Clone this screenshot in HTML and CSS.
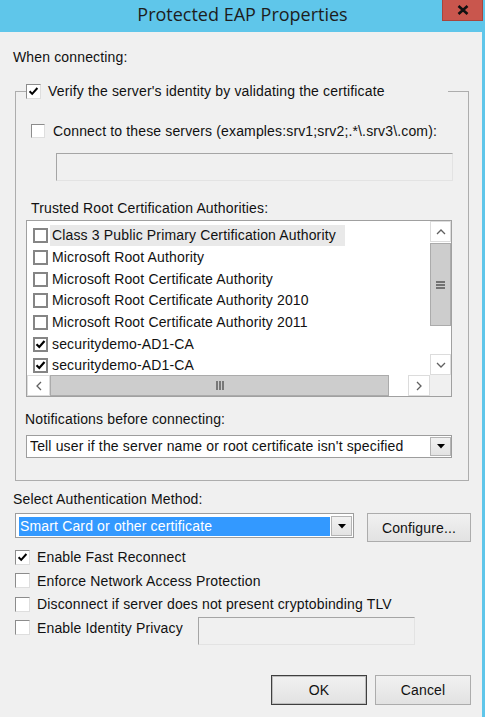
FILE: index.html
```html
<!DOCTYPE html>
<html>
<head>
<meta charset="utf-8">
<title>Protected EAP Properties</title>
<link rel="stylesheet" href="styles.css">
</head>
<body>
<div class="window">
  <div class="titlebar">
    <div class="title">Protected EAP Properties</div>
    <div class="close">
      <svg width="12" height="10" viewBox="0 0 12 10"><path d="M1.5 1 L10.5 9 M10.5 1 L1.5 9" stroke="#111" stroke-width="2.6" fill="none"/></svg>
    </div>
  </div>
  <div class="content">
    <div class="label when">When connecting:</div>
    <fieldset class="group">
      <legend class="legend">
        <span class="legend-inner">
          <span class="cb sunken"><svg class="tick" viewBox="0 0 15 15"><path d="M3 7.2 L6 10.2 L12 3.5" stroke="#000" stroke-width="2.3" fill="none"/></svg></span>
          <span>Verify the server's identity by validating the certificate</span>
        </span>
      </legend>
      <div class="check-row connect"><span class="cb sunken small"></span><span>Connect to these servers (examples:srv1;srv2;.*\.srv3\.com):</span></div>
      <div class="textbox servers"></div>
      <div class="label trusted">Trusted Root Certification Authorities:</div>
      <div class="listbox">
        <div class="list-items">
          <div class="item"><span class="cb list"></span><span class="item-text focus">Class 3 Public Primary Certification Authority</span></div>
          <div class="item"><span class="cb list"></span><span class="item-text">Microsoft Root Authority</span></div>
          <div class="item"><span class="cb list"></span><span class="item-text">Microsoft Root Certificate Authority</span></div>
          <div class="item"><span class="cb list"></span><span class="item-text">Microsoft Root Certificate Authority 2010</span></div>
          <div class="item"><span class="cb list"></span><span class="item-text">Microsoft Root Certificate Authority 2011</span></div>
          <div class="item"><span class="cb list"><svg class="tick" viewBox="0 0 11 11"><path d="M1.5 5.2 L4.3 8 L9.5 2" stroke="#000" stroke-width="2.2" fill="none"/></svg></span><span class="item-text">securitydemo-AD1-CA</span></div>
          <div class="item"><span class="cb list"><svg class="tick" viewBox="0 0 11 11"><path d="M1.5 5.2 L4.3 8 L9.5 2" stroke="#000" stroke-width="2.2" fill="none"/></svg></span><span class="item-text">securitydemo-AD1-CA</span></div>
        </div>
        <div class="vscroll">
          <div class="sbtn"><svg width="10" height="6" viewBox="0 0 10 6"><path d="M1 5 L5 1 L9 5" stroke="#606060" stroke-width="1.3" fill="none"/></svg></div>
          <div class="vthumb"><svg width="9" height="8" viewBox="0 0 9 8"><path d="M0 1 H9 M0 4 H9 M0 7 H9" stroke="#555" stroke-width="1.4"/></svg></div>
          <div class="track"></div>
          <div class="sbtn"><svg width="10" height="6" viewBox="0 0 10 6"><path d="M1 1 L5 5 L9 1" stroke="#606060" stroke-width="1.3" fill="none"/></svg></div>
        </div>
        <div class="hscroll">
          <div class="sbtn hbtn-left"><svg width="6" height="10" viewBox="0 0 6 10"><path d="M5 1 L1 5 L5 9" stroke="#606060" stroke-width="1.3" fill="none"/></svg></div>
          <div class="hthumb"><svg width="8" height="9" viewBox="0 0 8 9"><path d="M1 0 V9 M4 0 V9 M7 0 V9" stroke="#555" stroke-width="1.4"/></svg></div>
          <div class="track"></div>
          <div class="sbtn hbtn-right"><svg width="6" height="10" viewBox="0 0 6 10"><path d="M1 1 L5 5 L1 9" stroke="#606060" stroke-width="1.3" fill="none"/></svg></div>
        </div>
        <div class="corner"></div>
      </div>
      <div class="label notif">Notifications before connecting:</div>
      <div class="combo notify">
        <span class="combo-text">Tell user if the server name or root certificate isn't specified</span>
        <span class="combo-btn"><svg width="8" height="5" viewBox="0 0 8 5"><path d="M0 0 H8 L4 4.5 Z" fill="#000"/></svg></span>
      </div>
    </fieldset>
    <div class="label select">Select Authentication Method:</div>
    <div class="method-row">
      <div class="combo method">
        <span class="combo-text selected">Smart Card or other certificate</span>
        <span class="combo-btn"><svg width="8" height="5" viewBox="0 0 8 5"><path d="M0 0 H8 L4 4.5 Z" fill="#000"/></svg></span>
      </div>
      <button class="btn configure">Configure...</button>
    </div>
    <div class="options">
      <div class="check-row"><span class="cb sunken"><svg class="tick" viewBox="0 0 15 15"><path d="M3 7.2 L6 10.2 L12 3.5" stroke="#000" stroke-width="2.3" fill="none"/></svg></span><span>Enable Fast Reconnect</span></div>
      <div class="check-row"><span class="cb sunken"></span><span>Enforce Network Access Protection</span></div>
      <div class="check-row"><span class="cb sunken"></span><span>Disconnect if server does not present cryptobinding TLV</span></div>
      <div class="check-row privacy-row"><span class="privacy-label"><span class="cb sunken"></span><span>Enable Identity Privacy</span></span><span class="textbox privacy"></span></div>
    </div>
    <div class="actions">
      <button class="btn default">OK</button>
      <button class="btn">Cancel</button>
    </div>
  </div>
</div>
</body>
</html>
```

FILE: styles.css
```css
* { box-sizing: border-box; }
html, body { margin: 0; padding: 0; }
body {
  font-family: "Liberation Sans", Arial, sans-serif;
  font-size: 14px;
  letter-spacing: 0.15px;
  color: #111;
}
.window {
  width: 485px;
  height: 717px;
  background: #5fc6ea;
  display: flex;
  flex-direction: column;
  overflow: hidden;
}
.titlebar {
  position: relative;
  height: 32px;
  flex: none;
}
.title {
  text-align: center;
  font-family: "Open Sans", "Noto Sans", sans-serif;
  font-size: 18px;
  letter-spacing: 0;
  line-height: 24px;
  padding-top: 2px;
  color: #1d1d1d;
}
.close {
  position: absolute;
  left: 442px;
  top: 0;
  width: 41px;
  height: 21px;
  background: #c9564d;
  border: 1px solid #a8453d;
  border-top: none;
  display: flex;
  align-items: center;
  justify-content: center;
}
.content {
  flex: 1;
  background: #f0f0f0;
  margin-right: 3px;
  display: flex;
  flex-direction: column;
  align-items: flex-start;
}
.label { line-height: 16px; height: 16px; white-space: nowrap; }
.when { margin: 17px 0 0 13px; }

.group {
  margin: 18px 0 0 15px;
  width: 454px;
  border: 1px solid #adadad;
  padding: 0 16px 22px 10px;
  min-width: 0;
  display: flex;
  flex-direction: column;
  align-items: flex-start;
}
.legend {
  padding: 0;
  width: 422px;
  height: 16px;
}
.legend-inner {
  display: flex;
  align-items: center;
  gap: 7px;
  height: 16px;
  line-height: 16px;
  white-space: nowrap;
}

.cb {
  flex: none;
  width: 15px;
  height: 15px;
  background: #fff;
  display: inline-flex;
  align-items: center;
  justify-content: center;
}
.cb.sunken {
  border-top: 1px solid #8c8c8c;
  border-left: 1px solid #8c8c8c;
  border-right: 1px solid #dedede;
  border-bottom: 1px solid #dedede;
}
.cb.small { width: 14px; height: 14px; }
.cb.list { border: 2px solid #858585; }
.cb .tick { width: 100%; height: 100%; display: block; }

.check-row {
  display: flex;
  align-items: center;
  gap: 7px;
  height: 16px;
  line-height: 16px;
  white-space: nowrap;
}
.connect { margin: 24px 0 0 5px; gap: 8px; }

.textbox {
  background: #f0f0f0;
  border-top: 1px solid #a5a5a5;
  border-left: 1px solid #a5a5a5;
  border-right: 1px solid #e3e3e3;
  border-bottom: 1px solid #e3e3e3;
}
.servers { margin: 14px 0 0 30px; width: 397px; height: 28px; }
.trusted { margin: 19px 0 0 5px; }

.listbox {
  margin-top: 4px;
  width: 426px;
  height: 177px;
  border: 1px solid #a0a0a0;
  background: #fff;
  display: grid;
  grid-template-columns: 1fr 21px;
  grid-template-rows: 1fr 21px;
}
.list-items {
  overflow: hidden;
  padding: 4px 0 0 6px;
}
.item {
  height: 21.67px;
  display: flex;
  align-items: center;
  gap: 2px;
  white-space: nowrap;
}
.item-text {
  padding: 0 9px 0 2px;
  line-height: 21px;
}
.item-text.focus { background: #e9e9e9; }

.vscroll {
  display: flex;
  flex-direction: column;
  background: #fff;
}
.sbtn {
  flex: none;
  width: 21px;
  height: 21px;
  background: #fff;
  border: 1px solid #dcdcdc;
  display: flex;
  align-items: center;
  justify-content: center;
}
.vthumb {
  flex: none;
  height: 83px;
  margin-top: 1px;
  background: #cdcdcd;
  border: 1px solid #ababab;
  display: flex;
  align-items: center;
  justify-content: center;
}
.track { flex: 1; background: #fff; }
.hscroll {
  display: flex;
  background: #fff;
}
.hbtn-left { width: 23px; }
.hbtn-right { width: 22px; }
.hthumb {
  flex: none;
  width: 339px;
  background: #cdcdcd;
  border: 1px solid #ababab;
  display: flex;
  align-items: center;
  justify-content: center;
}
.corner { background: #f0f0f0; }

.notif { margin: 14px 0 0 -1px; }
.combo {
  display: flex;
  background: #fff;
  border: 1px solid #9d9d9d;
  white-space: nowrap;
}
.notify {
  margin-top: 8px;
  width: 426px;
  height: 23px;
  padding: 1px 0 1px 3px;
  align-items: center;
}
.combo-text { flex: 1; line-height: 19px; overflow: hidden; }
.combo-btn {
  flex: none;
  width: 21px;
  align-self: stretch;
  background: linear-gradient(#f2f2f2, #e3e3e3);
  border: 1px solid #b4b4b4;
  display: flex;
  align-items: center;
  justify-content: center;
}
.select { margin: 10px 0 0 13px; }
.method-row {
  margin: 6px 0 0 15px;
  display: flex;
  align-items: flex-start;
  gap: 13px;
}
.method {
  width: 339px;
  height: 25px;
  padding: 2px 1px 1px 3px;
}
.combo-text.selected {
  background: #3399ff;
  color: #fff;
  padding-left: 1px;
  margin: 1px 1px 0 0;
  line-height: 19px;
}
.btn {
  font-family: "Liberation Sans", Arial, sans-serif;
  font-size: 14px;
  letter-spacing: 0.15px;
  color: #111;
  background: linear-gradient(#f1f1f1, #e2e2e2);
  border: 1px solid #acacac;
  padding: 0;
  margin: 0;
}
.configure { width: 104px; height: 29px; }

.options {
  margin: 7px 0 0 15px;
  display: flex;
  flex-direction: column;
  gap: 7.67px;
}
.privacy-row { gap: 0; }
.privacy-label {
  width: 183px;
  flex: none;
  display: flex;
  align-items: center;
  gap: 7px;
}
.privacy {
  width: 217px;
  height: 28px;
  margin-top: -3px;
  align-self: flex-start;
}
.actions {
  align-self: stretch;
  margin-top: 39px;
  padding-right: 11px;
  display: flex;
  justify-content: flex-end;
  gap: 8px;
}
.actions .btn { width: 96px; height: 30px; }
.btn.default {
  border: 1px solid #3f3f3f;
  box-shadow: inset 0 0 0 1px #bdbdbd;
}
```
